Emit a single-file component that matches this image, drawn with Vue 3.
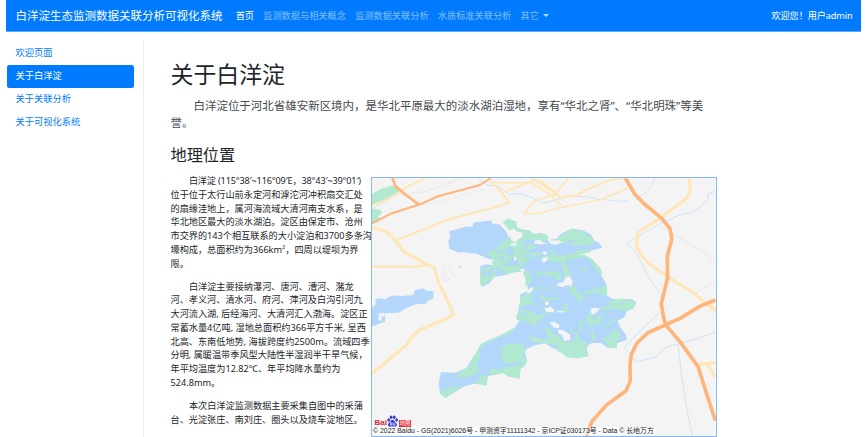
<script setup>
const links = ['首页', '监测数据与相关概念', '监测数据关联分析', '水质标准关联分析', '其它']
const menu = ['欢迎页面', '关于白洋淀', '关于关联分析', '关于可视化系统']
const paragraphs = [
  [
    '白洋淀 (115°38′~116°09′E，38°43′~39°01′)',
    '位于位于太行山前永定河和滹沱河冲积扇交汇处',
    '的扇缘洼地上，属河海流域大清河南支水系，是',
    '华北地区最大的淡水湖泊。淀区由保定市、沧州',
    '市交界的143个相互联系的大小淀泊和3700多条沟',
    '壕构成，总面积约为366km²，四周以堤坝为界',
    '限。'
  ],
  [
    '白洋淀主要接纳瀑河、唐河、漕河、潴龙',
    '河、孝义河、清水河、府河、萍河及白沟引河九',
    '大河流入湖, 后经海河、大清河汇入渤海。淀区正',
    '常蓄水量4亿吨, 湿地总面积约366平方千米, 呈西',
    '北高、东南低地势, 海拔跨度约2500m。流域四季',
    '分明, 属暖温带季风型大陆性半湿润半干旱气候，',
    '年平均温度为12.82℃、年平均降水量约为',
    '524.8mm。'
  ],
  [
    '本次白洋淀监测数据主要采集自图中的采蒲',
    '台、光淀张庄、南刘庄、圈头以及烧车淀地区。'
  ]
]
</script>

<template>
  <div class="page">
    <nav class="navbar">
      <span class="brand">白洋淀生态监测数据关联分析可视化系统</span>
      <a v-for="(l, i) in links" :key="l" class="link" :class="{ on: i === 0 }">{{ l }}<i v-if="i === 4" class="caret"></i></a>
      <span class="user">欢迎您！用户admin</span>
    </nav>
    <div class="body">
      <aside class="side">
        <a v-for="(m, i) in menu" :key="m" class="item" :class="{ active: i === 1 }">{{ m }}</a>
      </aside>
      <main class="main">
        <h1>关于白洋淀</h1>
        <div class="lead">
          <div class="first">白洋淀位于河北省雄安新区境内，是华北平原最大的淡水湖泊湿地，享有“华北之肾”、“华北明珠”等美</div>
          <div>誉。</div>
        </div>
        <h2>地理位置</h2>
        <div class="cols">
          <div class="text">
            <div v-for="(p, i) in paragraphs" :key="i" class="para">
              <div v-for="line in p" :key="line" class="line" :class="{ coords: line.includes('°') }">{{ line }}</div>
            </div>
          </div>
          <div class="map">
            <svg viewBox="21 24 1032 777" preserveAspectRatio="none">
              <rect x="21" y="24" width="1032" height="777" fill="#f4f4f4" />
              <!-- parks and streams -->
              <g fill="#b0e9cf">
                <path d="M21 72 45 58 83 46 106 62 95 76 62 88 21 108Z" />
                <path d="M21 117 45 119 53 129 39 140 47 148 21 157Z" />
                <path d="M282 289 289 288 292 293 285 294Z" />
              </g>
              <g fill="none" stroke="#c8def7" stroke-width="2.5">
                <path d="M340 24 365 45 400 49 431 73 467 70 490 78 535 100 570 91 615 76 672 82 704 88 768 94 792 93" />
                <path d="M815 88 834 74 850 64 863 43 871 24" />
                <path d="M1053 64 1030 72 1029 91 1008 111 985 126 946 135 882 164 785 220 815 250 830 278 850 322 893 378" />
                <path d="M885 430 822 489 780 533 815 577 875 563 904 533 940 524 994 510 1053 488" />
                <path d="M940 524 950 610 966 715 983 801" />
                <path d="M76 113 83 119M21 117 60 95" />
              </g>
              <g fill="none" stroke="#e5dedd" stroke-width="2">
                <path d="M55 82 120 73 180 65 260 37 285 24" />
                <path d="M160 108 260 86 365 55" stroke-dasharray="7 4" />
                <path d="M891 170 1053 270M980 381 1053 334M228 312 243 298M250 300 266 312 268 322M262 330 240 333 228 324M243 306 238 322 254 328" />
              </g>
              <!-- local roads -->
              <g fill="none" stroke="#ffe6b4" stroke-linejoin="round">
                <path d="M21 106 68 88 128 50 180 24M378 35 402 58 435 98 380 115 249 149 92 213" stroke-width="6" />
                <path d="M378 37 460 39 496 36 515 24M409 69 496 37 550 70 590 105M478 131 506 95 571 73 612 24M478 131 525 131 575 116 710 88 790 54" stroke-width="5" />
                <path d="M501 24 540 49 589 83 632 77 675 55 735 31 774 24M525 31 572 68" stroke-width="6" />
                <path d="M21 174 62 184 92 213 116 246 175 278 208 294 220 336 263 426 265 437 240 450 165 481 142 500 126 526 21 612" stroke-width="9" />
                <path d="M21 291 150 291 190 286" stroke-width="7" />
                <path d="M972 24 978 54 970 82 890 143 820 188 815 233 846 276 909 322 986 369 1053 426M1003 584 1053 581M1028 584 1053 624" stroke-width="9" />
                <path d="M1028 396 1053 420" stroke-width="7" />
              </g>
              <!-- trunk roads -->
              <g fill="none" stroke="#ffb47a" stroke-linejoin="round">
                <path d="M82 24 92 49 124 76 163 105" stroke-width="8" />
                <path d="M21 161 81 130 163 104 220 79 345 45 379 24" stroke-width="6" />
                <path d="M782 24 810 72 840 103 890 144 916 176 922 207 908 260 909 325 890 403 897 445 904 467 948 519 1001 593 1030 686 1053 755" stroke-width="11" />
                <path d="M1053 391 1008 409 948 446 904 466 850 490 818 520 800 555 796 590 797 635 784 665 725 708 682 757 665 801" stroke-width="11" />
              </g>
              <!-- lakes -->
              <path d="M31 388 45 386 60 390 80 378 110 379 145 376 150 362 178 356 180 363 206 365 205 388 190 392 185 402 150 405 125 415 102 430 60 431 60 456 21 471 21 415 32 404Z" fill="#b3d6fb" />
              <path d="M42 432 55 430 63 438 50 442 49 456 40 451Z" fill="#f4f4f4" />
              <path d="M252 184 285 176 304 170 322 171 326 158 378 152 383 162 405 164 424 185 432 205 411 228 400 243 384 250 384 271 359 263 337 253 311 250 295 247 280 248 254 237 250 215 257 200Z" fill="#b3d6fb" />
              <path d="M414 158 431 147 439 153 454 156 457 172 470 180 494 181 506 193 525 190 548 196 552 210 575 208 589 192 620 177 654 181 677 193 689 212 705 221 713 234 676 243 651 253 681 267 699 287 707 310 727 350 725 376 740 386 765 393 799 388 815 398 810 412 786 426 779 443 759 454 767 475 786 499 786 512 757 522 755 537 729 535 710 521 681 521 665 533 672 560 635 567 605 563 590 544 563 535 540 522 509 528 480 543 487 575 467 599 464 628 431 622 415 611 370 620 364 649 328 643 298 652 269 669 242 686 225 673 222 638 228 608 270 611 305 596 317 575 334 550 347 525 370 513 400 501 448 477 463 455 454 444 466 409 466 375 489 364 487 337 474 306 439 308 416 318 388 322 373 342 350 352 347 330 346 290 365 284 385 287 387 252 405 241 430 205 441 194 430 177 427 164Z" fill="#b3d6fb" />
              <!-- south-western reed beds -->
              <g fill="#b0e9cf">
                <path d="M408 535 430 523 478 524 483 546 472 556 487 575 480 590 467 599 464 628 431 622 415 611 384 618 369 612 384 597 405 601 425 592 447 591 457 577 437 584 420 579 405 568 414 550Z" />
                <path d="M448 475 400 501 370 513 347 525 334 550 317 575 318 590 292 603 271 622 301 625 332 616 345 597 333 584 344 568 345 540 360 524 405 506 442 488ZM328 643 343 627 354 614 368 620 364 649ZM229 664 258 654 285 651 268 669 242 686 228 677Z" />
              </g>
              <path d="M438 587 474 574 472 584 448 590Z" fill="#b3d6fb" />
              <!-- central marsh -->
              <g transform="translate(330 120)">
                <g fill="#b0e9cf">
                  <path d="M84 38 100 27 125 36 127 52 145 60 165 63 170 72 180 75 200 70 218 77 220 91 205 97 180 96 168 89 150 91 140 103 125 108 106 103 106 76 96 53Z" />
                  <path d="M102 84 86 94 76 105 60 119 38 128 38 138 61 149 50 157 59 169 78 176 95 197 108 191 135 184 133 170 110 165 94 154 115 144 101 134 91 119 108 111Z" />
                  <path d="M15 181 32 173 60 167 69 187 61 201 45 211 33 220 22 231 16 224Z" />
                  <path d="M107 108 133 104 171 105 191 111 167 119 151 124 171 130 201 128 202 136 181 141 165 148 151 159 142 177 132 164 127 150 110 144 120 126ZM145 178 157 184 172 205 166 223 151 231 153 210Z" />
                  <path d="M218 93 244 91 266 74 290 56 300 58 306 64 322 61 335 75 349 83 359 96 351 107 330 105 318 109 295 105 281 100 266 101 251 99ZM190 143 219 139 232 134 222 116 236 125 246 138 274 136 319 121 349 119 347 126 325 134 342 142 365 162 380 179 383 194 369 188 348 155 323 141 299 148 279 148 270 157 281 177 290 202 280 208 269 199 264 176 258 159 224 154Z" />
                  <path d="M184 184 216 187 236 184 258 190 262 208 246 213 235 201 216 196 186 199ZM326 176 337 173 341 182 330 185ZM281 228 302 232 308 248 320 254 326 270 309 276 299 261 287 249ZM326 247 347 242 371 236 395 226 398 249 388 259 374 250 355 249 330 257Z" />
                  <path d="M169 236 188 232 186 240 171 246ZM190 230 222 234 239 230 246 235 220 239 195 236ZM192 253 216 267 251 263 247 270 217 275 194 266ZM139 264 156 252 179 257 164 264 173 279 198 286 166 284 146 287 137 299 131 293Z" />
                  <path d="M131 305 151 302 172 306 184 319 212 311 229 302 230 308 202 326 187 339 182 353 160 337 139 334 124 329ZM267 286 280 282 276 304 291 308 266 308ZM210 291 202 298 211 307Z" />
                  <path d="M413 274 431 268 449 268 467 271 482 284 475 299 460 302 443 304 426 300 382 301 382 296 412 290 396 278ZM341 310 349 309 360 318 381 319 382 333 368 346 344 349 334 335ZM377 292 418 292 409 298 388 303Z" />
                  <path d="M313 338 323 330 326 345 321 354 327 365 315 366ZM346 362 356 366 366 393 354 391ZM386 383 407 378 406 366 424 362 440 373 430 383 442 389 425 397 427 413 411 417 393 410 404 402 388 397ZM387 350 426 325 421 337 403 348Z" />
                  <path d="M163 373 181 385 205 390 228 381 212 369 209 353 224 357 234 374 250 377 270 398 287 399 301 389 303 374 283 367 291 361 310 374 315 390 337 401 339 414 332 421 342 440 306 447 274 442 260 430 246 424 251 408 220 403 205 399 181 400 164 391Z" />
                </g>
                <g fill="#b3d6fb">
                  <path d="M22 184 32 179 34 198 25 205ZM46 179 57 172 55 191 41 203 39 195ZM60 125 82 122 97 125 84 131ZM68 143 86 136 91 142 76 149ZM144 111 158 109 155 117 139 119ZM116 151 126 153 124 158 113 155ZM276 92 296 89 303 95 288 99ZM353 321 366 319 371 326 361 332 353 329ZM436 280 458 277 453 282 440 284ZM265 415 280 420 269 425ZM80 158 103 163 111 171 90 168Z" />
                  <path d="M62 188 86 185 92 191 66 193ZM147 135 168 134 166 141 150 144ZM146 311 164 314 158 320 144 318ZM399 384 416 387 411 393 398 389Z" />
                </g>
                <g fill="#f4f4f4">
                  <path d="M83 45 98 62 106 77 110 91 121 98 132 88 144 80 141 68 126 65 117 57 104 62 91 46ZM107 101 127 100 124 108 108 108ZM180 93 193 90 204 98 220 100 200 104 178 101ZM218 88 233 93 252 91 262 98 242 105 226 101Z" />
                  <path d="M203 126 215 125 217 133 207 136ZM200 148 218 140 218 151 207 160ZM118 142 125 141 124 152 118 153ZM136 179 148 177 151 185 138 186ZM312 136 357 127 337 135Z" />
                  <path d="M249 221 267 217 272 203 285 201 294 214 291 229 276 226 265 232 248 229ZM157 244 165 236 176 232 170 249 158 252ZM211 277 220 276 222 286 211 289ZM210 297 227 292 239 300 238 308 214 307ZM248 304 268 304 263 309 246 308Z" />
                  <path d="M348 298 359 294 376 297 371 304 356 316 348 309ZM225 339 240 337 255 348 252 356 237 354ZM249 362 262 360 286 376 287 391 269 395 261 377 251 372Z" />
                </g>
              </g>
            </svg>
            <div class="logo">
              <b>Bai</b>
              <svg class="paw" viewBox="0 0 32 34">
                <g fill="#3439dc">
                  <ellipse cx="5" cy="14" rx="4" ry="5" />
                  <ellipse cx="12" cy="6" rx="4" ry="5" />
                  <ellipse cx="21" cy="6" rx="4" ry="5" />
                  <ellipse cx="28" cy="14" rx="4" ry="5" />
                  <path d="M16 13c5 0 6 6 10 9 5 5 3 11-3 11H9c-7 0-8-7-3-11 4-3 5-9 10-9Z" />
                </g>
                <path d="M13 22h-3v7h4v-9M18 22v7h5v-7" fill="none" stroke="#fff" stroke-width="2" />
              </svg>
              <span class="tag">地图</span>
            </div>
            <div class="copy">© 2022 Baidu - GS(2021)6026号 - 甲测资字11111342 - 京ICP证030173号 - Data © 长地万方</div>
          </div>
        </div>
      </main>
    </div>
  </div>
</template>

<style>
body { background: #fff; overflow: hidden; }
</style>
<style scoped>
* { box-sizing: border-box; }
.page {
  height: 437px;
  padding: 0 4px 0 6px;
  overflow: hidden;
  font: 9.17px/13.76px "Noto Sans", "Noto Sans CJK SC", sans-serif;
  color: #212529;
  white-space: nowrap;
}
.navbar {
  display: flex;
  align-items: center;
  height: 32px;
  padding: 0 8.5px 0 9.5px;
  background: #007bff;
  border-bottom: 1px solid #58a8ff;
  color: #fff;
}
.brand { width: 211px; font-size: 11.5px; }
.link { margin-left: 9.2px; font-size: 9.2px; color: rgba(255, 255, 255, .5); }
.link.on { color: #fff; }
.caret {
  display: inline-block;
  margin-left: 4px;
  vertical-align: 2px;
  border: 3px solid transparent;
  border-top-color: rgba(255, 255, 255, .75);
  border-bottom: 0;
}
.user { margin-left: auto; letter-spacing: -.12px; }
.body { display: flex; padding-top: 9px; }
.side {
  width: 138px;
  height: 396px;
  padding: .5px 9.5px 0 .5px;
  border-right: 1px solid #eceeef;
}
.item {
  display: flex;
  align-items: center;
  height: 23px;
  padding-left: 9px;
  border-radius: 2.3px;
  font-size: 9.25px;
  color: #007bff;
}
.item.active { background: #007bff; color: #fff; }
.main { padding: 20px 0 0 26.5px; }
h1 { margin: 0; font-size: 22.9px; line-height: 27.5px; font-weight: 400; }
.lead { margin-top: 8px; font-size: 11.47px; line-height: 17.6px; color: #454a4e; }
.first { padding-left: 23px; }
h2 { margin: 13px 0 0; font-size: 16.2px; line-height: 20px; font-weight: 400; }
.cols { display: flex; padding-top: 9.4px; }
.text { width: 200.5px; }
.para { margin-bottom: 9.17px; }
.line:first-child { padding-left: 18.4px; }
.coords { letter-spacing: -.18px; }
.map {
  position: relative;
  width: 345.5px;
  height: 260px;
  margin-top: 2.6px;
  border: 1px solid #83b9f6;
}
.map > svg { display: block; width: 100%; height: 100%; }
.logo {
  position: absolute;
  left: 2.5px;
  bottom: 8.5px;
  display: flex;
  align-items: flex-end;
  height: 12px;
  font: 700 8px/8px "Liberation Sans", sans-serif;
  color: #e22432;
}
.paw { width: 11px; height: 12px; }
.tag {
  margin-left: 1px;
  width: 12px;
  height: 7px;
  background: #e22432;
  color: #fff;
  font: 5.5px/7px "Noto Sans CJK SC", sans-serif;
  text-align: center;
}
.copy {
  position: absolute;
  left: 1px;
  bottom: 1px;
  padding-right: 2px;
  background: rgba(255, 255, 255, .6);
  font: 6.9px/8px "Liberation Sans", "Noto Sans CJK SC", sans-serif;
  color: #222;
}
</style>
